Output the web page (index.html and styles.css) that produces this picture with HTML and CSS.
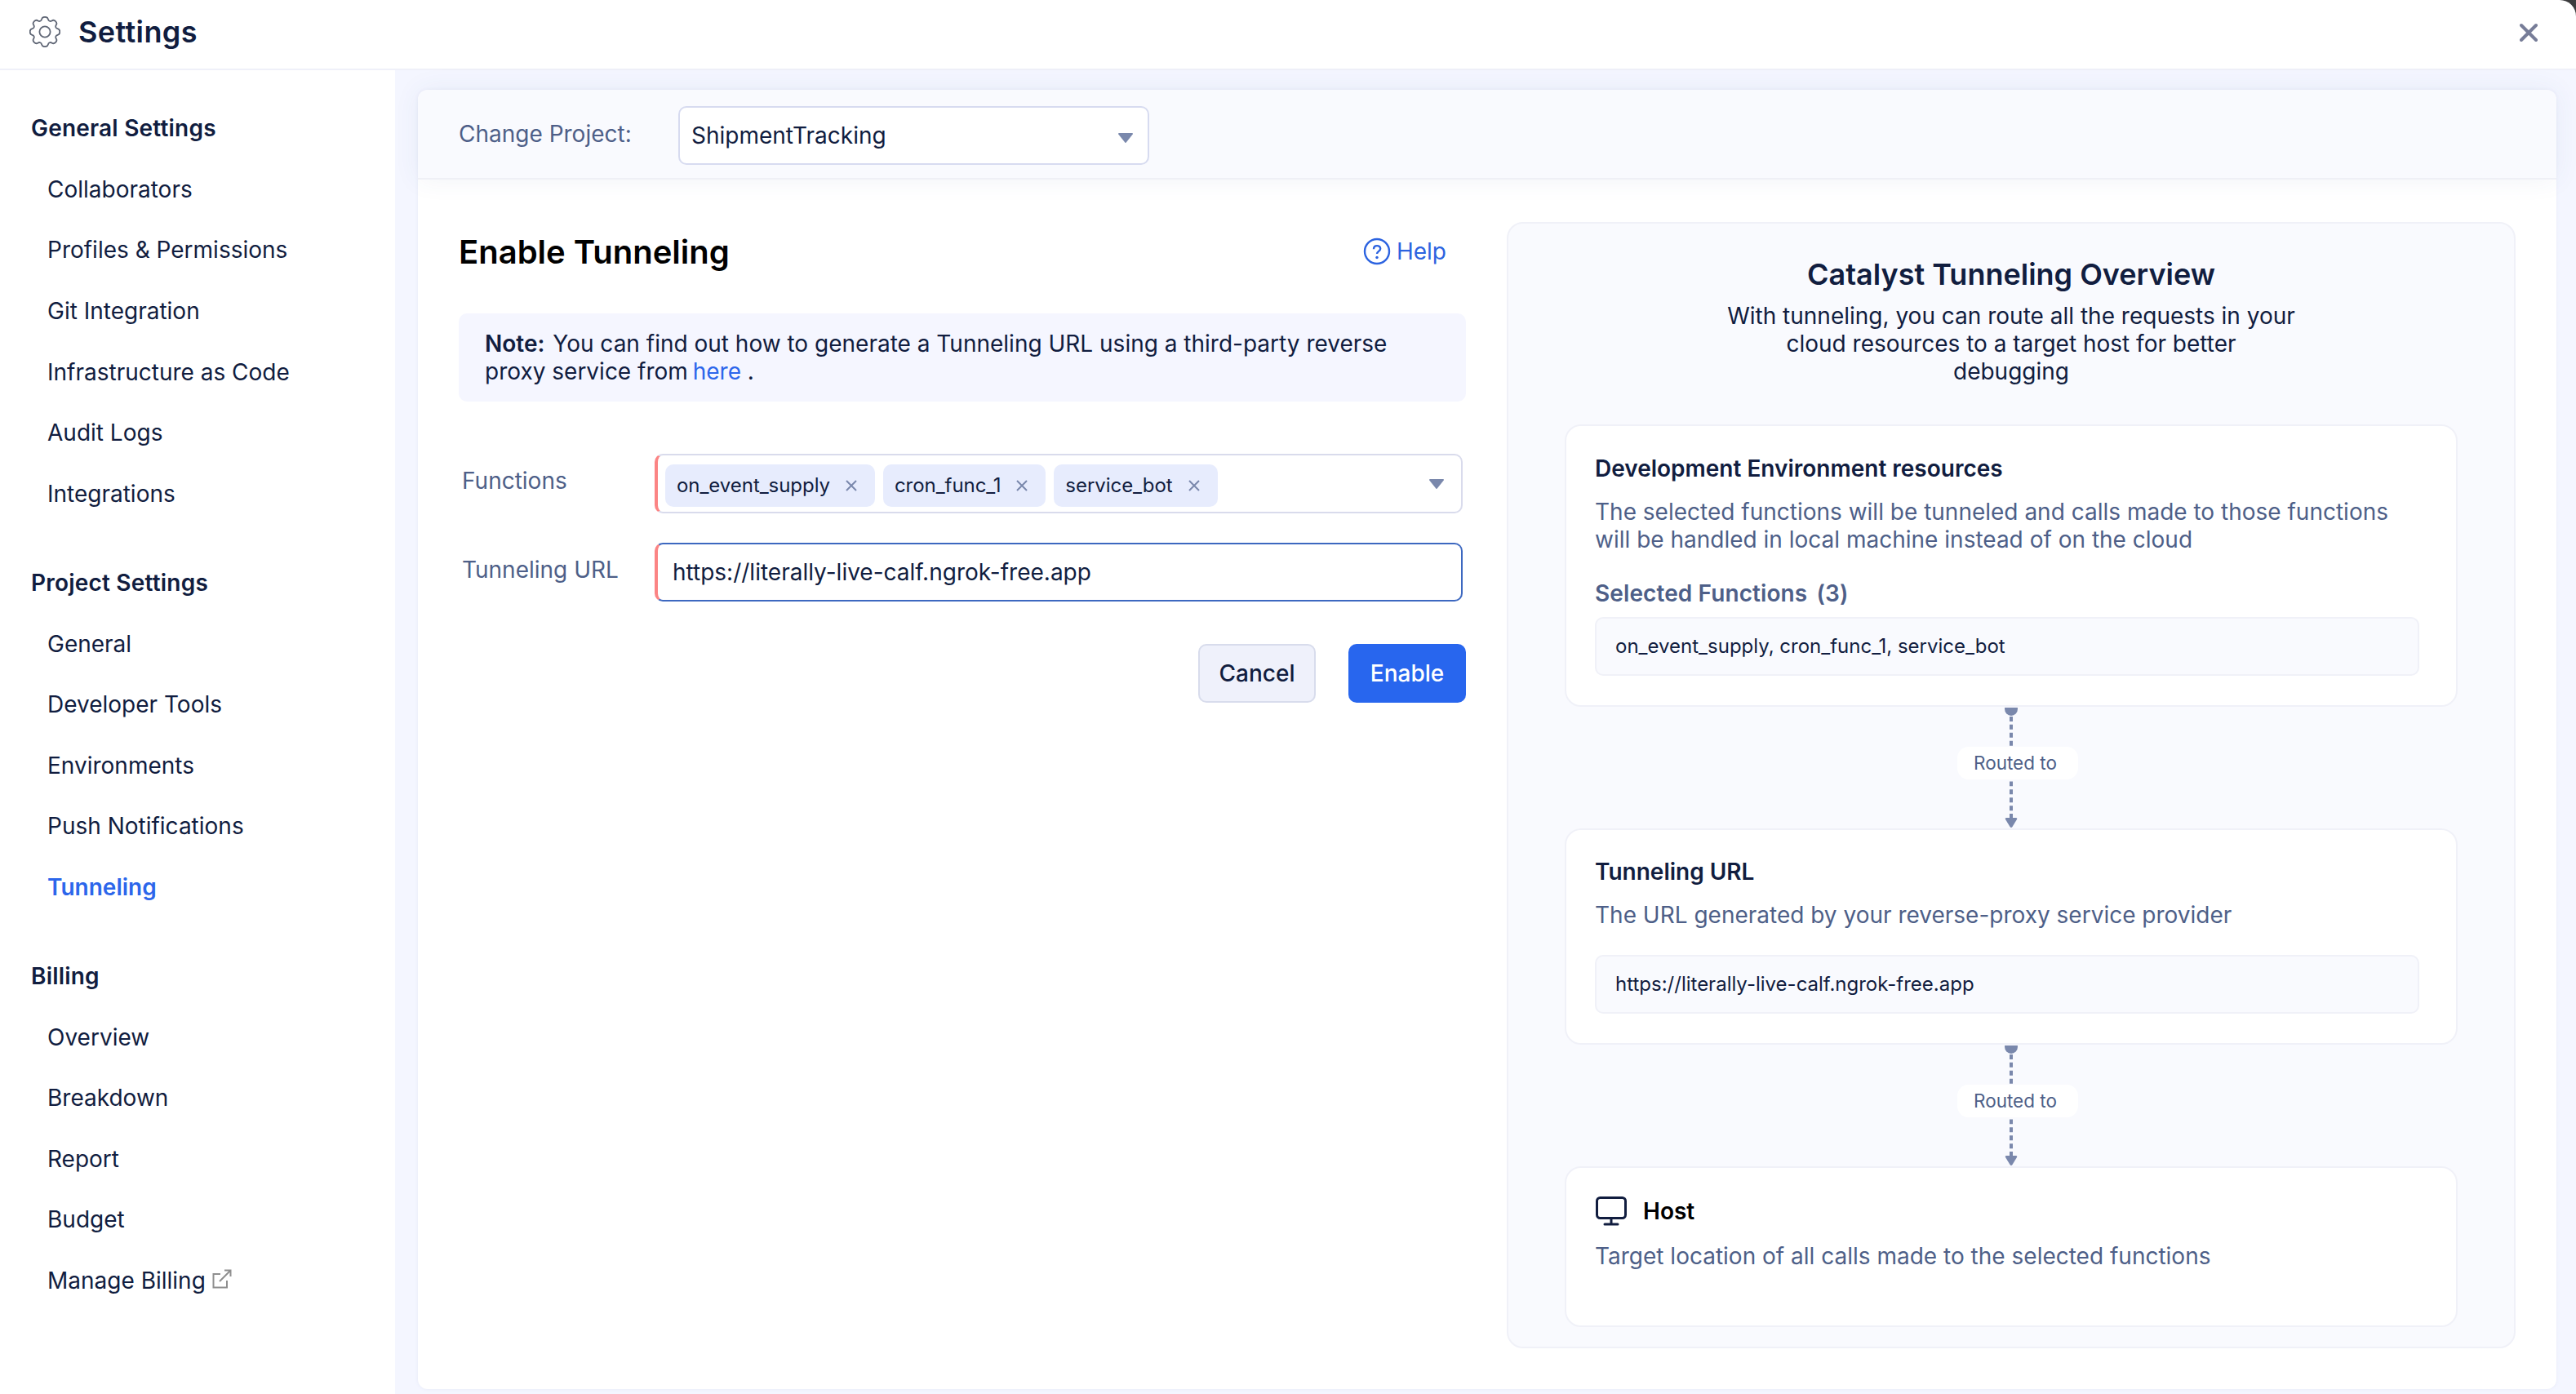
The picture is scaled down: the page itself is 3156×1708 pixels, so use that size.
FILE: index.html
```
<!doctype html>
<html>

<head>
	<meta charset="utf-8">
	<title>Settings</title>
	<link rel="stylesheet" href="styles.css">
</head>

<body>
	<div class="window">
		<!-- Top bar -->
		<div class="topbar">
			<svg class="gear" viewBox="0 0 38 38"><path d="M19 .8c2.600 0 3.600.8 4 2.800c.4 2.200 2.600 3 4.400 1.900c1.700-1.200 3.200-.9 4.700.6s1.800 3 .6 4.700c-1.100 1.800-.3 4 1.900 4.400c2 .4 2.700 1.300 2.700 3.800s-.7 3.400-2.700 3.800c-2.200.4-3 2.600-1.900 4.400c1.200 1.700.9 3.200-.6 4.700s-3 1.800-4.700.6c-1.800-1.100-4-.3-4.400 1.900c-.4 2-1.400 2.800-4 2.800s-3.600-.8-4-2.800c-.4-2.200-2.600-3-4.400-1.900c-1.700 1.200-3.200.9-4.700-.6s-1.800-3-.6-4.700c1.100-1.800.3-4-1.900-4.400c-2-.4-2.700-1.300-2.700-3.800s.7-3.400 2.700-3.800c2.200-.4 3-2.600 1.900-4.400c-1.200-1.700-.9-3.200.6-4.700s3-1.800 4.700-.6c1.800 1.100 4 .3 4.400-1.900c.4-2 1.400-2.800 4-2.800z"/><circle cx="19" cy="19" r="6.600"/></svg>
			<h1 class="title">Settings</h1>
			<svg class="close" viewBox="0 0 22 24"><path d="M2 3l18 18M20 3L2 21"/></svg>
		</div>

		<div class="layout">
			<!-- Sidebar -->
			<div class="sidebar">
				<div class="nav-group">
					<div class="nav-head">General Settings</div>
					<div class="nav-item">Collaborators</div>
					<div class="nav-item">Profiles &amp; Permissions</div>
					<div class="nav-item">Git Integration</div>
					<div class="nav-item">Infrastructure as Code</div>
					<div class="nav-item">Audit Logs</div>
					<div class="nav-item">Integrations</div>
				</div>
				<div class="nav-group">
					<div class="nav-head">Project Settings</div>
					<div class="nav-item">General</div>
					<div class="nav-item">Developer Tools</div>
					<div class="nav-item">Environments</div>
					<div class="nav-item">Push Notifications</div>
					<div class="nav-item selected">Tunneling</div>
				</div>
				<div class="nav-group">
					<div class="nav-head">Billing</div>
					<div class="nav-item">Overview</div>
					<div class="nav-item">Breakdown</div>
					<div class="nav-item">Report</div>
					<div class="nav-item">Budget</div>
					<div class="nav-item">Manage Billing
						<svg class="external" viewBox="0 0 24 24"><path d="M10 6H1.500v16.500H18V14M9 15L22 2M15 1.500h7.500V9"/></svg>
					</div>
				</div>
			</div>

			<div class="main">
				<div class="card">
					<div class="project-bar">
						<label class="project-label">Change Project:</label>
						<div class="project-select">ShipmentTracking
							<svg class="caret" viewBox="0 0 20 14"><path d="M2 2h16L10 12z"/></svg>
						</div>
					</div>

					<div class="content">
						<!-- Tunneling form -->
						<div class="form">
							<div class="form-head">
								<h2>Enable Tunneling</h2>
								<a class="help">
									<svg viewBox="0 0 34 34"><circle cx="17" cy="17" r="15"/><path d="M13 14.200c0-5.600 8.200-5.200 8.200-.4c0 3-4.200 3.200-4.200 6.200"/><circle class="dot" cx="17" cy="24.500" r="1.700"/></svg>
									Help
								</a>
							</div>
							<div class="note"><b>Note:</b> You can find out how to generate a Tunneling URL using a third-party reverse<br>proxy service from <a>here</a> .</div>

							<div class="field">
								<label>Functions</label>
								<div class="box tags">
									<div class="tag">on_event_supply <svg viewBox="0 0 16 16"><path d="M2 2l12 12M14 2L2 14"/></svg></div>
									<div class="tag">cron_func_1 <svg viewBox="0 0 16 16"><path d="M2 2l12 12M14 2L2 14"/></svg></div>
									<div class="tag">service_bot <svg viewBox="0 0 16 16"><path d="M2 2l12 12M14 2L2 14"/></svg></div>
									<svg class="caret" viewBox="0 0 20 14"><path d="M2 2h16L10 12z"/></svg>
								</div>
							</div>
							<div class="field">
								<label>Tunneling URL</label>
								<div class="box url">https://literally-live-calf.ngrok-free.app</div>
							</div>

							<div class="btn-row">
								<div class="btn btn-cancel">Cancel</div>
								<div class="btn btn-enable">Enable</div>
							</div>
						</div>

						<!-- Overview diagram -->
						<div class="overview">
							<h3>Catalyst Tunneling Overview</h3>
							<p class="intro">With tunneling, you can route all the requests in your<br>cloud resources to a target host for better<br>debugging</p>

							<div class="step step-env">
								<h4>Development Environment resources</h4>
								<p>The selected functions will be tunneled and calls made to those functions<br>will be handled in local machine instead of on the cloud</p>
								<div class="sub">Selected Functions <span>(3)</span></div>
								<div class="value">on_event_supply, cron_func_1, service_bot</div>
							</div>
							<div class="link">
								<svg viewBox="0 0 20 150"><path class="fill" d="M2 1h16v2a8 8 0 0 1-16 0z"/><path class="dash" d="M10 12v126"/><path class="fill" d="M4 137h12q2 0 1 2l-5.500 9q-1.500 2-3 0L3 139q-1-2 1-2z"/></svg>
								<span>Routed to</span>
							</div>
							<div class="step step-url">
								<h4>Tunneling URL</h4>
								<p>The URL generated by your reverse-proxy service provider</p>
								<div class="value">https://literally-live-calf.ngrok-free.app</div>
							</div>
							<div class="link">
								<svg viewBox="0 0 20 150"><path class="fill" d="M2 1h16v2a8 8 0 0 1-16 0z"/><path class="dash" d="M10 12v126"/><path class="fill" d="M4 137h12q2 0 1 2l-5.500 9q-1.500 2-3 0L3 139q-1-2 1-2z"/></svg>
								<span>Routed to</span>
							</div>
							<div class="step step-host">
								<h4><svg viewBox="0 0 38 36"><rect x="1.500" y="1.500" width="35" height="25" rx="4"/><path d="M19 27v6M11 34h16"/></svg>Host</h4>
								<p>Target location of all calls made to the selected functions</p>
							</div>
						</div>
					</div>
				</div>
			</div>
		</div>
	</div>
</body>

</html>
```
FILE: styles.css
```
* { margin: 0; padding: 0; box-sizing: border-box; }
html { background-color: #3b3b3d; }
body { height: 1708px; overflow: hidden; font-family: Inter, "Liberation Sans", sans-serif; font-size: 28px; line-height: 34px; color: #111d3f; }
svg { fill: none; flex: none; }
.window { height: 1708px; display: flex; flex-direction: column; background-color: #fff; border-top-right-radius: 20px; }

.topbar { height: 86px; display: flex; align-items: center; padding: 0 47px 6px 36px; border-bottom: 2px solid #eff0f9; }
.gear { width: 38px; height: 38px; margin-right: 22px; stroke: #5f6675; stroke-width: 1.8; }
.title { font-size: 36px; font-weight: 600; letter-spacing: 0.4px; }
.close { width: 22px; height: 24px; margin: 2px 0 0 auto; stroke: #777d98; stroke-width: 4; stroke-linecap: round; }

.layout { flex: 1; display: flex; min-height: 0; }
.sidebar { width: 484px; padding: 34px 0 0 38px; }
.nav-group { margin-bottom: 34.500px; }
.nav-head, .nav-item { height: 74.600px; display: flex; align-items: center; }
.nav-head { font-weight: 600; letter-spacing: 0.2px; }
.nav-item { padding-left: 20px; }
.nav-item.selected { color: #2c66eb; font-weight: 600; }
.external { width: 24px; height: 24px; margin: -4px 0 0 8px; stroke: #8f8f8f; stroke-width: 2; }

.main { flex: 1; padding: 24px 24px 6px 28px; background-color: #f4f6ff; }
.card { height: 1592px; background-color: #fff; border-radius: 12px; box-shadow: 0 0 4px #e6e9f6; }
.project-bar { height: 110px; display: flex; align-items: center; padding: 2px 0 0 50px; background-color: #f9fafe; border-bottom: 2px solid #eff0f6; border-radius: 12px 12px 0 0; box-shadow: 0 0 32px rgba(60, 80, 140, 0.07); }
.project-label { width: 269px; margin-top: -2px; color: #4e5f88; }
.project-select { width: 577px; height: 72px; display: flex; align-items: center; justify-content: space-between; margin-top: 2px; padding: 0 17px 0 14px; background-color: #fff; border: 2px solid #d7dbf0; border-radius: 10px; }
.caret { width: 20px; height: 14px; fill: #7a88ac; stroke: #7a88ac; stroke-width: 2; stroke-linejoin: round; }
.project-select .caret { margin-top: 5px; }

.content { display: flex; align-items: flex-start; padding: 52px 50px 0 50px; }
.form { width: 1234px; padding-top: 16px; }
.form-head { display: flex; align-items: center; justify-content: space-between; height: 40px; padding-right: 24px; }
.form-head h2 { padding-top: 2px; font-size: 40px; font-weight: 600; color: #000; }
.help { display: flex; align-items: center; gap: 7px; color: #2c63e0; }
.help svg { width: 34px; height: 34px; stroke: #2c63e0; stroke-width: 2.400; }
.help .dot { fill: #2c63e0; stroke: none; }
.note { height: 108px; margin: 56px 0 64px; padding: 20px 32px; background-color: #f5f6ff; border-radius: 10px; }
.note b { margin-right: 2px; font-weight: 600; }
.note a { margin-left: -2px; color: #2c66eb; }
.field { display: flex; margin-bottom: 36px; padding-left: 4px; }
.field label { width: 236px; padding-top: 16px; color: #4e5f88; }
.box { width: 990px; height: 73px; display: flex; align-items: center; border: 2px solid #d9dbec; border-left: 4px solid #fb8484; border-radius: 10px; }
.tags { gap: 10px; padding: 4px 20px 0 9px; }
.tags .caret { margin: -4px 0 0 auto; }
.tag { height: 52px; display: flex; align-items: center; padding: 0 21px 0 14px; background-color: #e7ecfd; border-radius: 10px; font-size: 24px; letter-spacing: -0.05px; }
.tag svg { width: 16px; height: 16px; margin-left: 18px; stroke: #7a88ac; stroke-width: 2; }
.box.url { height: 72px; padding: 0 0 1px 18px; border-color: #3d68c0 #3d68c0 #3d68c0 #fb8484; }
.btn-row { display: flex; justify-content: flex-end; gap: 40px; margin-top: 52px; }
.btn { width: 144px; height: 72px; display: flex; align-items: center; justify-content: center; border-radius: 10px; font-weight: 500; }
.btn-cancel { background-color: #eff1fb; border: 2px solid #d8dcec; }
.btn-enable { color: #fff; background-color: #2866ee; }

.overview { width: 1236px; height: 1380px; margin-left: 50px; padding: 44px 69px 0; background-color: #f9fafe; border: 2px solid #f0f1f8; border-radius: 20px; }
.overview h3 { height: 44px; line-height: 36px; font-size: 36px; font-weight: 600; text-align: center; }
.intro { height: 158px; padding-top: 8px; text-align: center; }
.step { padding: 35px 34px 0 35px; background-color: #fff; border: 2px solid #f0f1f8; border-radius: 20px; }
.step h4 { display: flex; align-items: center; font-size: 28px; font-weight: 600; }
.step p { margin-top: 19px; color: #4e5f88; }
.step-env { height: 346px; }
.step-url { height: 265px; padding-top: 34px; }
.step-host { height: 197px; }
.sub { margin-top: 32px; color: #4e5f88; font-weight: 600; letter-spacing: 0.1px; }
.sub span { margin-left: 4px; }
.value { width: 1010px; height: 72px; display: flex; align-items: center; margin-top: 12px; padding-left: 23px; background-color: #f9fafe; border: 2px solid #f0f1f8; border-radius: 10px; font-size: 24px; }
.step-url .value { margin-top: 32px; }
.step-host h4 { color: #000; }
.step-host h4 svg { width: 38px; height: 36px; margin-right: 20px; margin-left: 1px; stroke: #111d3f; stroke-width: 3; stroke-linecap: round; }
.step-host p { margin-top: 20px; }
.link { position: relative; height: 149px; }
.link svg { display: block; width: 20px; height: 149px; margin: 0 auto; }
.link .fill { fill: #7a88ac; }
.link .dash { stroke: #7a88ac; stroke-width: 4; stroke-dasharray: 6 4; }
.link span { position: absolute; left: 481px; top: 49px; width: 148px; height: 40px; padding-right: 6px; line-height: 40px; text-align: center; color: #4e5f88; background-color: #fff; border-radius: 14px; font-size: 22.500px; }
```
